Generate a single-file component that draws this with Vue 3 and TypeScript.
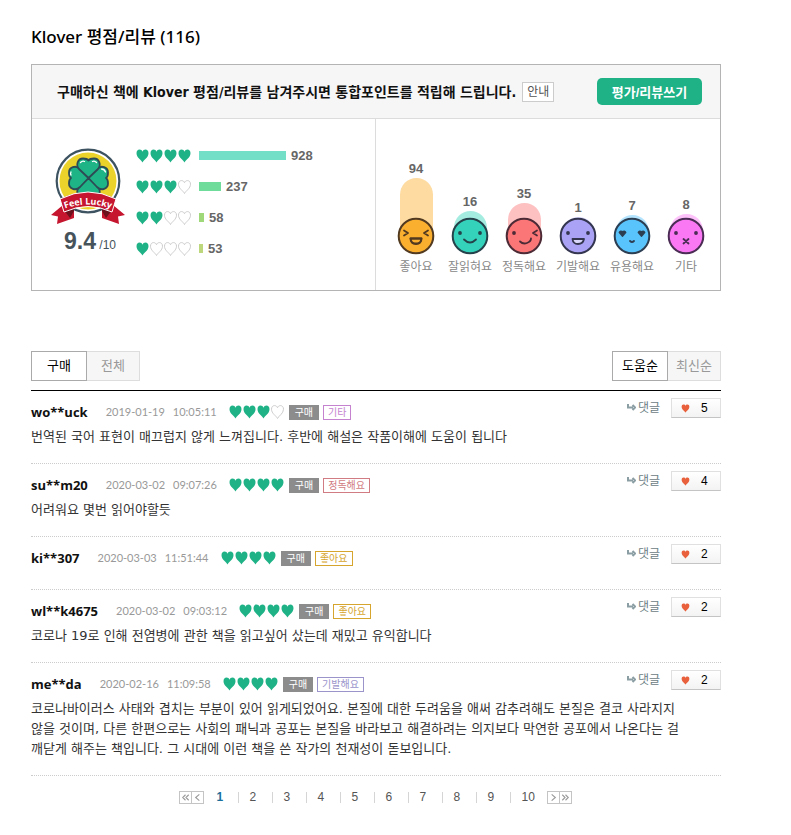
<script setup lang="ts">
import { ref } from 'vue'

interface Review {
  user: string
  date: string
  time: string
  hearts: number
  tag: string
  tone: string
  likes: number
  text: string
}

const heartPath =
  'M6.5 13.5C5.3 10.8 .5 8.6 .5 4.2C.5 1.9 1.8 .6 3.5 .6C5 .6 6 1.4 6.500 2.700C7 1.400 8 .6 9.500 .6C11.200 .6 12.500 1.900 12.500 4.200C12.500 8.600 7.700 10.800 6.500 13.500Z'
const leafPath = 'M0 0L-9 -8.5C-13.5 -13 -10.5 -19.5 -5.5 -19.5C-3 -19.5 -1 -19 0 -17.5C1 -19 3 -19.5 5.5 -19.5C10.5 -19.5 13.5 -13 9 -8.5Z'

const ratings = [
  { hearts: 4, count: 928, width: 87, color: '#72dfc6' },
  { hearts: 3, count: 237, width: 22, color: '#70dc9c' },
  { hearts: 2, count: 58, width: 5, color: '#9fd878' },
  { hearts: 1, count: 53, width: 4, color: '#bdd77c' },
]

const moods = [
  { id: 'good', label: '좋아요', count: 94, height: 58, color: '#fbaf2f', line: '#523a20' },
  { id: 'read', label: '잘읽혀요', count: 16, height: 25, color: '#35d2bb', line: '#25424a' },
  { id: 'deep', label: '정독해요', count: 35, height: 33, color: '#fb7677', line: '#4d2b36' },
  { id: 'idea', label: '기발해요', count: 1, height: 19, color: '#a9a2f5', line: '#343650' },
  { id: 'use', label: '유용해요', count: 7, height: 21, color: '#59c3fb', line: '#2c3e52' },
  { id: 'etc', label: '기타', count: 8, height: 22, color: '#fb78f4', line: '#4a2c54' },
]

const reviews = ref<Review[]>([
  { user: 'wo**uck', date: '2019-01-19', time: '10:05:11', hearts: 3, tag: '기타', tone: 'violet', likes: 5, text: '번역된 국어 표현이 매끄럽지 않게 느껴집니다. 후반에 해설은 작품이해에 도움이 됩니다' },
  { user: 'su**m20', date: '2020-03-02', time: '09:07:26', hearts: 4, tag: '정독해요', tone: 'rose', likes: 4, text: '어려워요 몇번 읽어야할듯' },
  { user: 'ki**307', date: '2020-03-03', time: '11:51:44', hearts: 4, tag: '좋아요', tone: 'gold', likes: 2, text: '' },
  { user: 'wl**k4675', date: '2020-03-02', time: '09:03:12', hearts: 4, tag: '좋아요', tone: 'gold', likes: 2, text: '코로나 19로 인해 전염병에 관한 책을 읽고싶어 샀는데 재밌고 유익합니다' },
  {
    user: 'me**da', date: '2020-02-16', time: '11:09:58', hearts: 4, tag: '기발해요', tone: 'indigo', likes: 2,
    text: '코로나바이러스 사태와 겹치는 부분이 있어 읽게되었어요. 본질에 대한 두려움을 애써 감추려해도 본질은 결코 사라지지\n않을 것이며, 다른 한편으로는 사회의 패닉과 공포는 본질을 바라보고 해결하려는 의지보다 막연한 공포에서 나온다는 걸\n깨닫게 해주는 책입니다. 그 시대에 이런 책을 쓴 작가의 천재성이 돋보입니다.',
  },
])

const filters = ['구매', '전체']
const sorts = ['도움순', '최신순']
const filter = ref('구매')
const sort = ref('도움순')
const page = ref(1)
</script>

<template>
  <main class="page">
    <h1 class="title">Klover 평점/리뷰 (116)</h1>

    <section class="summary">
      <header class="banner">
        <strong class="banner-text">구매하신 책에 Klover 평점/리뷰를 남겨주시면 통합포인트를 적립해 드립니다.</strong>
        <button type="button" class="guide">안내</button>
        <button type="button" class="write">평가/리뷰쓰기</button>
      </header>

      <div class="stats">
        <div class="score-panel">
          <div class="score">
            <svg class="emblem" viewBox="0 0 76 78" aria-hidden="true">
              <circle cx="38" cy="33" r="31.3" fill="#fff" stroke="#3d5361" stroke-width="2.2" />
              <circle cx="38" cy="33" r="28.5" fill="#ecd32b" />
              <g transform="translate(38.5 30)" fill="#1fb486" stroke="#2e4a55" stroke-width="1.8" stroke-linejoin="round">
                <path v-for="a in [180, 90, 270, 0]" :key="a" :d="leafPath" :transform="`rotate(${a})`" />
                <path d="M-8 -15.500q2 -2 4 -1M-17.500 -6q-1 2 0 3M4 -16.500q2 -1 4 1M13 -9q3 0 4 3" fill="none" stroke="#fff" stroke-width="1.300" stroke-linecap="round" />
              </g>
              <path d="M13 57L1 67L8 68.500L7 76L24 70V62Z" fill="#c5152f" />
              <path d="M63 57L75 67L68 68.500L69 76L52 70V62Z" fill="#c5152f" />
              <path d="M14 62L24 59L24 63L20 70Z" fill="#6b101c" />
              <path d="M62 62L52 59L52 63L56 70Z" fill="#6b101c" />
              <path d="M10 51Q38 37 66 51L62 64Q38 53 14 64Z" fill="#c5152f" stroke="#fff" stroke-width="1" />
              <path id="ribbon-line" d="M10 62.500Q38 50.500 66 62.500" fill="none" />
              <text class="ribbon-text"><textPath href="#ribbon-line" startOffset="50%" text-anchor="middle">Feel Lucky</textPath></text>
            </svg>
            <p class="points"><strong>9.4</strong> /10</p>
          </div>
          <ul class="ratings">
            <li v-for="r in ratings" :key="r.hearts" class="rating">
              <span class="hearts">
                <svg v-for="n in 4" :key="n" class="heart" :class="{ empty: n > r.hearts }" viewBox="0 0 13 14" aria-hidden="true"><path :d="heartPath" /></svg>
              </span>
              <span class="bar" :style="{ width: r.width + 'px', background: r.color }"></span>
              <span class="count">{{ r.count }}</span>
            </li>
          </ul>
        </div>

        <ul class="moods">
          <li v-for="m in moods" :key="m.id" class="mood">
            <span class="count">{{ m.count }}</span>
            <span class="column" :style="{ height: m.height + 'px', background: m.color }"></span>
            <svg class="face" viewBox="0 0 38 38" aria-hidden="true">
              <circle cx="19" cy="19" r="17.3" :fill="m.color" :stroke="m.line" stroke-width="2" />
              <g fill="none" :stroke="m.line" stroke-width="1.8" stroke-linecap="round" stroke-linejoin="round">
                <template v-if="m.id === 'good'">
                  <path d="M7 13.5L11 16L7 18.5M31 13.5L27 16L31 18.5" />
                  <path d="M13.5 21.5H24.500Q24.500 27 19 27T13.500 21.500Z" />
                  <path d="M13.500 21.500H24.500Q24 26.500 19 26.500T13.500 21.500Z" />
                </template>
                <template v-else-if="m.id === 'read'">
                  <circle cx="9" cy="16" r="1" /><circle cx="29" cy="16" r="1" />
                  <path d="M13 22.500Q19 28.500 25 22.500" />
                </template>
                <template v-else-if="m.id === 'deep'">
                  <circle cx="9" cy="16" r="1" />
                  <path d="M32 13.500L28 16L32 18.500M15 24.500Q18 27.500 22 26T26 21.500" />
                </template>
                <template v-else-if="m.id === 'idea'">
                  <circle cx="9" cy="16" r="1" /><circle cx="29" cy="16" r="1" />
                  <path d="M13.500 22H25Q24 27 19 27T13.500 22Z" fill="#d9d6fb" />
                </template>
                <template v-else-if="m.id === 'use'">
                  <path d="M9.500 19L6.500 15.500Q7.500 13.500 9.500 15Q11.500 13.500 12.500 15.500ZM28.500 19L25.500 15.500Q26.500 13.500 28.500 15Q30.500 13.500 31.500 15.500Z" :fill="m.line" />
                  <path d="M17 24Q19 26 21 24" />
                </template>
                <template v-else>
                  <circle cx="9" cy="16" r="1" /><circle cx="29" cy="16" r="1" />
                  <path d="M16.500 22L21.500 26.500M21.500 22L16.500 26.500" />
                </template>
              </g>
            </svg>
            <span class="mood-label">{{ m.label }}</span>
          </li>
        </ul>
      </div>
    </section>

    <nav class="toolbar">
      <div class="tabs">
        <button v-for="f in filters" :key="f" type="button" class="tab" :class="{ active: filter === f }" @click="filter = f">{{ f }}</button>
      </div>
      <div class="tabs">
        <button v-for="s in sorts" :key="s" type="button" class="tab" :class="{ active: sort === s }" @click="sort = s">{{ s }}</button>
      </div>
    </nav>

    <section class="reviews">
      <article v-for="r in reviews" :key="r.user" class="review">
        <div class="review-head">
          <div class="meta">
            <strong class="user">{{ r.user }}</strong>
            <span class="when"><span>{{ r.date }}</span><span>{{ r.time }}</span></span>
            <span class="hearts">
              <svg v-for="n in 4" :key="n" class="heart" :class="{ empty: n > r.hearts }" viewBox="0 0 13 14" aria-hidden="true"><path :d="heartPath" /></svg>
            </span>
            <span class="tag bought">구매</span>
            <span class="tag" :class="r.tone">{{ r.tag }}</span>
          </div>
          <div class="actions">
            <a href="#" class="reply" @click.prevent>
              <svg class="arrow" viewBox="0 0 9 8" aria-hidden="true"><path d="M1 0V3.500H6M5.500 1L8 3.500L5.500 6" /></svg>댓글</a>
            <button type="button" class="like" @click="r.likes++">
              <svg class="like-heart" viewBox="0 0 13 14" aria-hidden="true"><path :d="heartPath" /></svg>
              <span>{{ r.likes }}</span>
            </button>
          </div>
        </div>
        <p v-if="r.text" class="body">{{ r.text }}</p>
      </article>
    </section>

    <nav class="pager">
      <div class="jump">
        <button type="button" @click="page = 1"><svg viewBox="0 0 12 12"><path d="M6 3L3 6L6 9M9.500 3L6.500 6L9.500 9" /></svg></button>
        <button type="button" @click="page = Math.max(1, page - 1)"><svg viewBox="0 0 12 12"><path d="M8 2.500L4 6L8 9.500" /></svg></button>
      </div>
      <ol class="numbers">
        <li v-for="n in 10" :key="n"><a href="#" :class="{ current: page === n }" @click.prevent="page = n">{{ n }}</a></li>
      </ol>
      <div class="jump">
        <button type="button" @click="page = Math.min(10, page + 1)"><svg viewBox="0 0 12 12"><path d="M4 2.500L8 6L4 9.500" /></svg></button>
        <button type="button" @click="page = 10"><svg viewBox="0 0 12 12"><path d="M2.500 3L5.500 6L2.500 9M6 3L9 6L6 9" /></svg></button>
      </div>
    </nav>
  </main>
</template>

<style>
body {
  margin: 0;
  background: #fff;
}
</style>

<style scoped>
* {
  box-sizing: border-box;
}
.page {
  padding: 25px 70px 20px 31px;
  font: 13px/20px "Liberation Sans", "Noto Sans CJK KR", sans-serif;
  color: #333;
}
h1,
p,
ul,
ol {
  margin: 0;
  padding: 0;
  list-style: none;
}
button {
  padding: 0;
  font-family: inherit;
  cursor: pointer;
}
svg {
  display: block;
  flex: none;
}
.title {
  margin-bottom: 15px;
  font: 500 17px/24px "Noto Sans", "Noto Sans CJK KR", sans-serif;
  color: #000;
}
.summary {
  border: 1px solid #b4b4b4;
}
.banner {
  display: flex;
  align-items: center;
  height: 54px;
  padding: 0 18px 0 25px;
  border-bottom: 1px solid #dcdcdc;
  background: #f6f6f6;
}
.banner-text {
  font-family: "DejaVu Sans Condensed", "DejaVu Sans", "Noto Sans CJK KR", sans-serif;
  font-size: 14px;
  color: #111;
  white-space: nowrap;
}
.guide {
  width: 32px;
  height: 20px;
  margin-left: 6px;
  border: 1px solid #ccc;
  background: #fff;
  font-size: 12px;
  line-height: 18px;
  color: #555;
}
.write {
  width: 105px;
  height: 27px;
  margin-left: auto;
  border: 0;
  border-radius: 5px;
  background: #20b287;
  font-size: 13px;
  font-weight: 700;
  color: #fff;
}
.stats {
  display: grid;
  grid-template-columns: 1fr 1fr;
  height: 171px;
}
.score-panel {
  display: flex;
  padding: 21px 0 0 18px;
  border-right: 1px solid #dcdcdc;
}
.score {
  width: 86px;
  padding-top: 8px;
}
.emblem {
  width: 76px;
  height: 78px;
}
.ribbon-text {
  font: 700 9px "Open Sans", sans-serif;
  fill: #fff;
}
.points {
  margin-top: 3px;
  padding-left: 14px;
  font-size: 12px;
  line-height: 24px;
  color: #46535b;
  white-space: nowrap;
}
.points strong {
  font-size: 23px;
}
.rating {
  display: flex;
  align-items: center;
  height: 31px;
}
.hearts {
  display: flex;
  gap: 1px;
}
.heart {
  width: 13px;
  height: 14px;
  fill: #20b287;
}
.heart.empty {
  fill: #fff;
  stroke: #ccc;
}
.bar {
  height: 9px;
  margin: 0 5px 0 8px;
}
.count {
  font-size: 13px;
  font-weight: 700;
  line-height: 18px;
  color: #666;
}
.moods {
  display: grid;
  grid-template-columns: repeat(6, 1fr);
  align-items: end;
  padding: 0 7px 13px 13px;
}
.mood {
  display: flex;
  flex-direction: column;
  align-items: center;
}
.column {
  width: 33px;
  margin-bottom: -19px;
  border-radius: 17px 17px 0 0;
  opacity: 0.45;
}
.face {
  position: relative;
  width: 38px;
  height: 38px;
}
.mood-label {
  margin-top: 2px;
  font-size: 12px;
  color: #888;
  white-space: nowrap;
}
.toolbar {
  display: flex;
  justify-content: space-between;
  padding: 60px 0 9px;
}
.tabs {
  display: flex;
}
.tab {
  width: 53px;
  height: 30px;
  border: 1px solid #ddd;
  border-left: 0;
  background: #f6f6f6;
  font-size: 13px;
  line-height: 26px;
  color: #999;
}
.tab.active {
  width: 56px;
  border: 1px solid #aaa;
  background: #fff;
  color: #000;
}
.reviews {
  border-top: 1px solid #000;
}
.review {
  padding: 7px 0 16px;
  border-bottom: 1px dotted #ccc;
}
.review-head {
  display: flex;
  justify-content: space-between;
  align-items: flex-start;
  padding-bottom: 5px;
}
.meta {
  display: flex;
  align-items: center;
  height: 20px;
  margin-top: 4px;
}
.user {
  margin-right: 18px;
  font-family: "Open Sans", sans-serif;
  font-size: 13px;
  color: #111;
}
.when {
  display: flex;
  gap: 8px;
  margin-right: 12px;
  font-family: Lato, sans-serif;
  font-size: 11px;
  color: #999;
}
.tag {
  height: 15px;
  margin-left: 4px;
  padding: 0 4px;
  border: 1px solid currentColor;
  font-size: 10px;
  line-height: 13px;
}
.bought {
  margin-left: 5px;
  padding: 0 5px;
  border-color: #8c8c8c;
  background: #8c8c8c;
  color: #fff;
}
.violet {
  color: #c583cf;
}
.rose {
  color: #d17b82;
}
.gold {
  color: #d6a52e;
}
.indigo {
  color: #9a94cb;
}
.actions {
  display: flex;
  align-items: center;
  gap: 11px;
}
.reply {
  display: flex;
  align-items: center;
  gap: 2px;
  font-size: 12px;
  color: #6d8085;
  text-decoration: none;
}
.arrow {
  width: 9px;
  height: 8px;
  fill: none;
  stroke: #8b9ea3;
  stroke-width: 2;
}
.like {
  display: flex;
  align-items: center;
  gap: 11px;
  width: 50px;
  height: 20px;
  padding-left: 9px;
  border: 1px solid #e0e0e0;
  border-bottom-color: #c4c4c4;
  background: linear-gradient(#fff, #f3f3f3);
  font-size: 12px;
  color: #000;
}
.like-heart {
  width: 9px;
  height: 9px;
  fill: #e8603c;
}
.body {
  padding-right: 30px;
  font-family: "DejaVu Sans", "Noto Sans CJK KR", sans-serif;
  white-space: pre-line;
}
.pager {
  display: flex;
  justify-content: center;
  align-items: center;
  padding: 11px 2px 0 0;
}
.jump {
  display: flex;
}
.jump button {
  width: 13px;
  height: 13px;
  border: 1px solid #c4c4c4;
  background: #fff;
}
.jump button + button {
  width: 12px;
  border-left: 0;
}
.jump svg {
  width: 11px;
  height: 11px;
  fill: none;
  stroke: #999;
  stroke-width: 1.2;
}
.numbers {
  display: flex;
  margin-right: 3px;
}
.numbers li {
  display: flex;
  align-items: center;
  width: 34px;
}
.numbers li + li::before {
  content: "";
  width: 1px;
  height: 11px;
  background: #d5d5d5;
}
.numbers a {
  margin-left: 11px;
  font-size: 12px;
  color: #555;
  text-decoration: none;
}
.numbers .current {
  margin-left: 13px;
  font-weight: 700;
  color: #1d6f9b;
}
</style>
